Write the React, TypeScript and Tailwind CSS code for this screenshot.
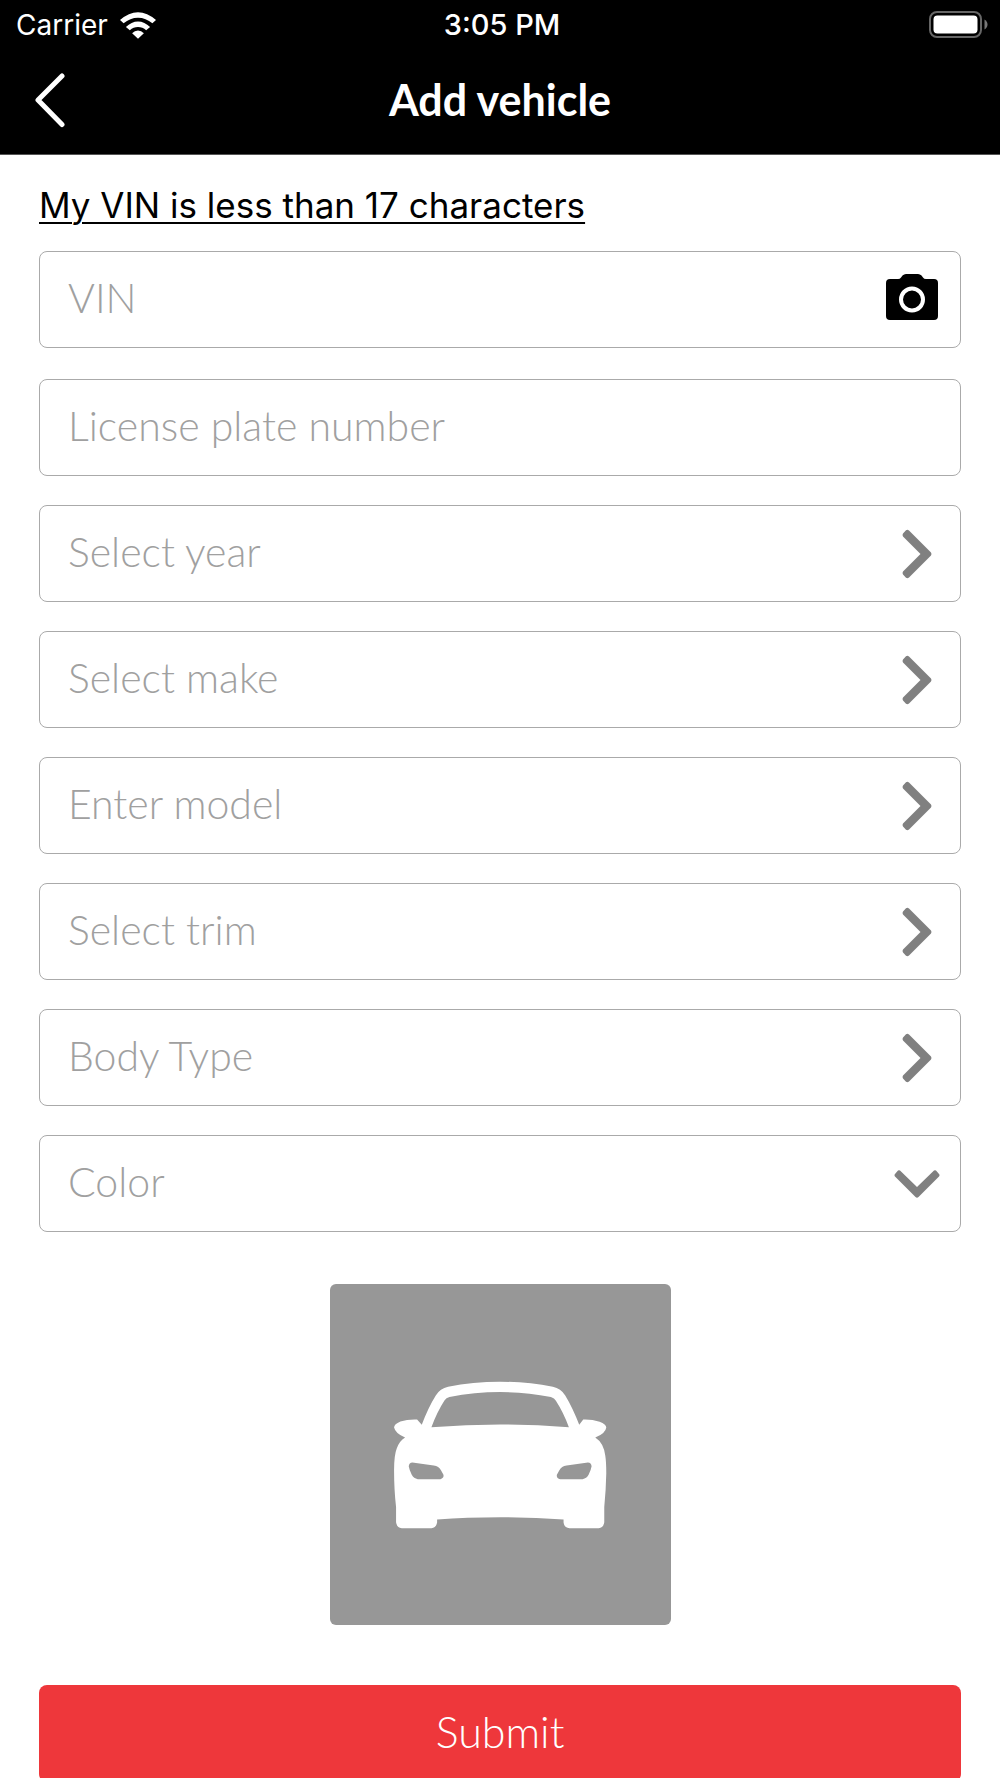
import { useState } from "react";

const fieldBox =
  "flex h-[97px] w-full items-center rounded-lg border border-[#aaaaaa] bg-white";
const fieldText =
  "font-['Lato',sans-serif] text-[41px] leading-[48px] font-light";

const pickers = ["Select year", "Select make", "Enter model", "Select trim", "Body Type"];
const colors = ["Black", "Blue", "Gray", "Red", "Silver", "White"];

function WifiIcon() {
  return (
    <svg width="36" height="27" viewBox="361 30 110 81" fill="#fff" aria-hidden="true">
      <path d="M361 54Q388 30 416 30Q444 30 471 54L460 64Q440 47 416 47Q392 47 372 64Z" />
      <path d="M379 75Q396 58 416 58Q436 58 453 75L441 85Q430 75 416 75Q402 75 391 85Z" />
      <path d="M398 94Q406 86 416 86Q426 86 434 94L416 111Z" />
    </svg>
  );
}

function BatteryIcon() {
  return (
    <svg width="59" height="28" viewBox="0 0 59 28" aria-hidden="true">
      <rect x="1" y="1" width="51" height="25" rx="7" fill="none" stroke="#666" strokeWidth="2" />
      <rect x="4.500" y="4.500" width="44" height="18" rx="4" fill="#fff" />
      <path d="M55.500 8.500c4 2.200 4 7.800 0 10z" fill="#777" />
    </svg>
  );
}

function BackIcon() {
  return (
    <svg width="31" height="56" viewBox="0 0 31 56" fill="none" aria-hidden="true">
      <path d="M28 4L4 28L28 52.500" stroke="#fff" strokeWidth="5" strokeLinecap="round" strokeLinejoin="round" />
    </svg>
  );
}

function CameraIcon() {
  return (
    <svg width="52" height="46" viewBox="0 0 52 46" aria-hidden="true">
      <path
        d="M4 5H12Q14 5 15 3.500L16.500 1.500Q18 0 20 0H32Q34 0 35.500 1.500L37 3.500Q38 5 40 5H48Q52 5 52 9V42Q52 46 48 46H4Q0 46 0 42V9Q0 5 4 5Z"
        fill="#000"
      />
      <circle cx="26" cy="25.500" r="11" fill="none" stroke="#fff" strokeWidth="4" />
    </svg>
  );
}

function ChevronRight() {
  return (
    <svg width="30" height="50" viewBox="0 0 30 50" fill="#808080" aria-hidden="true">
      <path d="M4 1.200Q5.500 .3 7 1.500L29 23.500Q30 25 29 26.500L7 48.500Q5.500 49.700 4 48.800L1 45.500Q0 44 1 42.500L18.500 25L1 7.500Q0 6 1 4.500Z" />
    </svg>
  );
}

function ChevronDown() {
  return (
    <svg width="46" height="28" viewBox="0 0 46 28" fill="#808080" aria-hidden="true">
      <path d="M4 .5Q5 0 6 .5L23 17L40 .5Q41 0 42 .5L45 4Q46 5 45 6.500L24.500 27Q23 28.300 21.500 27L1 6.500Q0 5 1 4Z" />
    </svg>
  );
}

function CarIcon() {
  return (
    <svg className="h-full w-full" viewBox="30 42 1022 1022" fill="#fff" aria-hidden="true">
      <path
        fillRule="evenodd"
        d="M305 464Q324 413 347 376Q360 355 384 350Q458 335 540 335Q622 335 698 350Q722 355 735 376Q757 412 777 464L789 448Q815 447 838 455Q858 463 858 472Q856 490 825 502Q850 518 855 556Q858 575 858 610Q857 660 852 710V756Q850 772 835 774H748Q732 772 730 757V748Q640 741 540 741Q440 741 351 748V757Q348 772 334 774H245Q230 772 228 756V710Q222 660 222 600Q222 555 230 535Q238 512 255 502Q226 490 222 472Q222 462 241 454Q262 447 291 448ZM334 471Q440 463 540 463Q640 463 746 471Q729 426 707 392Q703 384 692 381Q617 366 540 366Q463 366 388 381Q378 383 373 391Q351 425 334 471ZM277 577L341 586Q356 588 363 601L370 614Q372 624 361 627H293Q281 625 275 614Q268 600 266 588Q267 578 277 577ZM803 577L739 586Q724 588 717 601L710 614Q708 624 720 627H787Q799 625 805 614Q812 600 814 588Q813 578 803 577Z"
      />
    </svg>
  );
}

export default function App() {
  const [color, setColor] = useState("");

  return (
    <div className="flex h-dvh flex-col bg-white">
      <header className="shrink-0 border-b border-[#555555] bg-black text-white">
        <div className="grid h-[50px] grid-cols-3 items-center pr-3 pl-4 font-['Inter',sans-serif] leading-[34px]">
          <div className="flex items-center gap-3 text-[28px]">
            <span>Carrier</span>
            <WifiIcon />
          </div>
          <time className="text-center text-[29px] font-medium">3:05 PM</time>
          <div className="flex justify-end">
            <BatteryIcon />
          </div>
        </div>
        <div className="grid h-[104px] grid-cols-[1fr_auto_1fr] items-center px-8 pb-1">
          <button type="button" aria-label="Back" className="w-fit p-0.5">
            <BackIcon />
          </button>
          <h1 className="font-['Lato',sans-serif] text-[43px] leading-[50px] font-bold">Add vehicle</h1>
        </div>
      </header>

      <main className="min-h-0 flex-1 overflow-y-auto px-[39px] [scrollbar-width:none]">
        <form onSubmit={(e) => e.preventDefault()} className="flex flex-col">
          <a
            href="#short-vin"
            className="mt-7 w-fit font-['Inter',sans-serif] text-[35px] leading-[44px] text-black underline decoration-2 underline-offset-4"
          >
            My VIN is less than 17 characters
          </a>

          <div className={`mt-6 pr-[22px] ${fieldBox}`}>
            <input
              type="text"
              aria-label="VIN"
              placeholder="VIN"
              className={`h-full min-w-0 flex-1 rounded-lg px-7 pb-1 text-black outline-none placeholder:text-[#a0a0a0] ${fieldText}`}
            />
            <button type="button" aria-label="Scan VIN" className="mb-1.5">
              <CameraIcon />
            </button>
          </div>

          <div className="mt-[31px] flex flex-col gap-[29px]">
            <div className={fieldBox}>
              <input
                type="text"
                aria-label="License plate number"
                placeholder="License plate number"
                className={`h-full min-w-0 flex-1 rounded-lg px-7 pb-1 text-black outline-none placeholder:text-[#a0a0a0] ${fieldText}`}
              />
            </div>

            {pickers.map((label) => (
              <button
                key={label}
                type="button"
                className={`justify-between px-7 text-left text-[#a0a0a0] ${fieldBox} ${fieldText}`}
              >
                <span className="pb-1">{label}</span>
                <ChevronRight />
              </button>
            ))}

            <div className={`relative ${fieldBox}`}>
              <select
                aria-label="Color"
                value={color}
                onChange={(e) => setColor(e.target.value)}
                className={`h-full w-full appearance-none rounded-lg bg-transparent px-7 pb-1 text-[#a0a0a0] outline-none ${fieldText}`}
              >
                <option value="">Color</option>
                {colors.map((c) => (
                  <option key={c} value={c}>
                    {c}
                  </option>
                ))}
              </select>
              <span className="pointer-events-none absolute inset-y-0 right-5 flex items-center">
                <ChevronDown />
              </span>
            </div>
          </div>

          <button
            type="button"
            aria-label="Add vehicle photo"
            className="mt-[52px] size-[341px] self-center rounded-md bg-[#979797]"
          >
            <CarIcon />
          </button>

          <button
            type="submit"
            className="mt-[60px] h-[97px] w-full shrink-0 rounded-lg bg-[#ee373b] pb-1 font-['Lato',sans-serif] text-[43px] leading-[50px] font-light text-white"
          >
            Submit
          </button>
        </form>
      </main>
    </div>
  );
}
